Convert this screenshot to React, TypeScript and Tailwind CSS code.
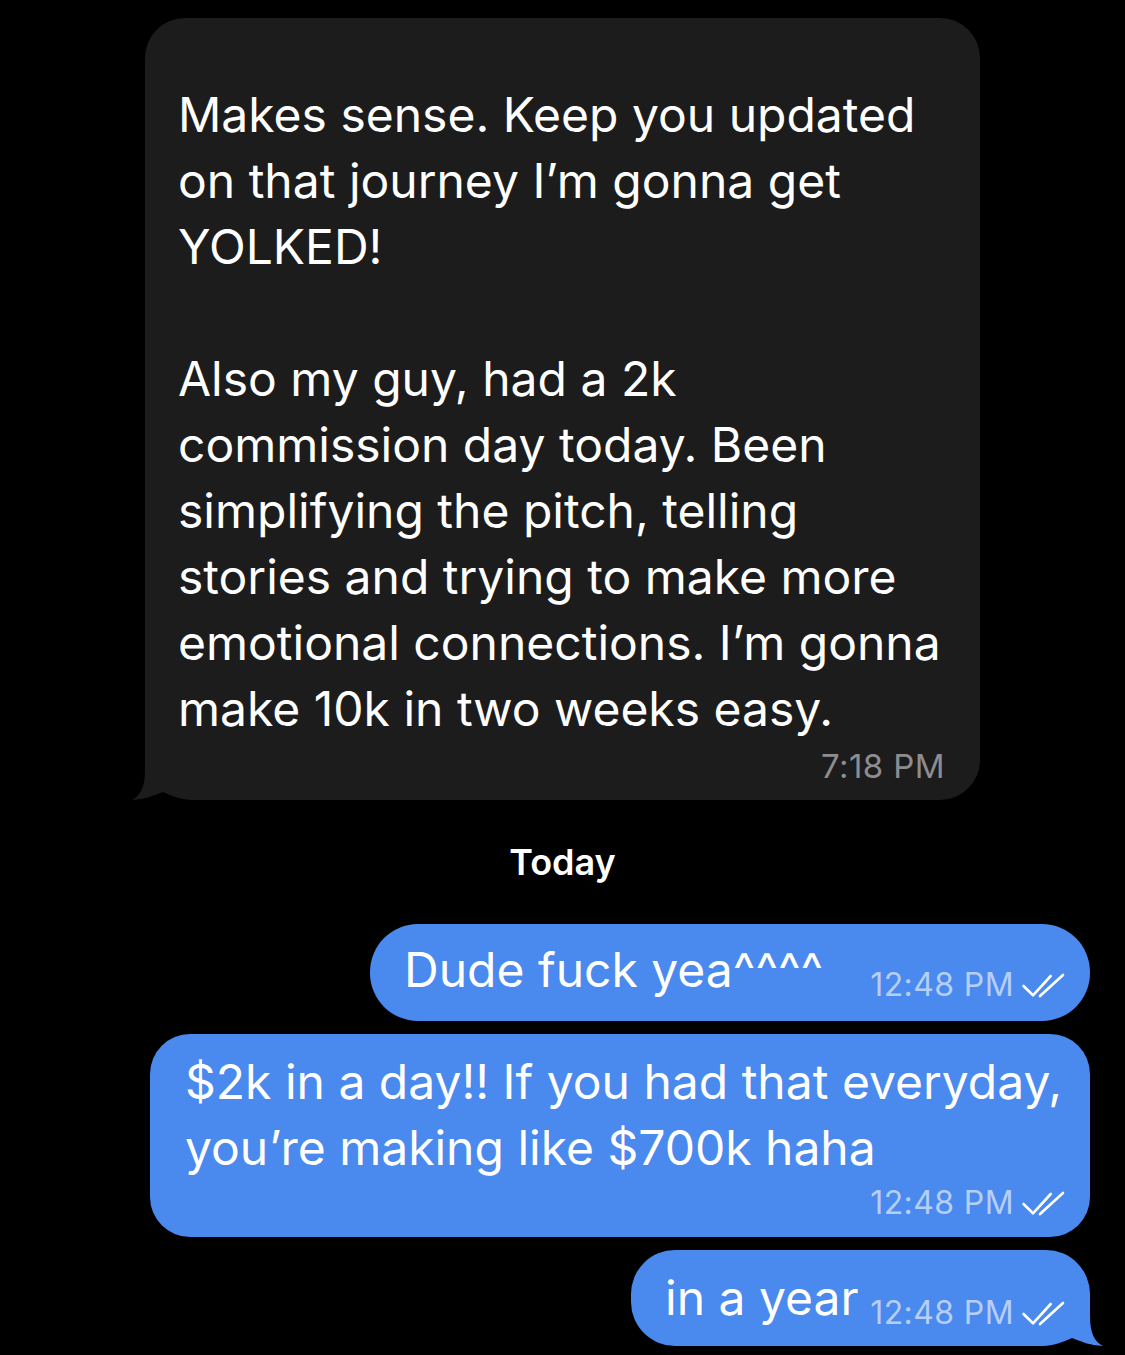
import React from "react";

const DARK = "#1c1c1d";
const BLUE = "#4a89ee";

function Tail({ color, flip }: { color: string; flip?: boolean }) {
  // corner tail + small notch along the bubble's bottom edge
  return (
    <svg
      width="60"
      height="30"
      viewBox="0 0 60 30"
      className={
        flip
          ? "absolute bottom-0 right-[-13px] -scale-x-100"
          : "absolute bottom-0 left-[-13px]"
      }
    >
      <path d="M13,0 C13,18 8,26 0,30 C12,30 23,25 31,22 L31,0 Z" fill={color} />
      <path d="M0,30 C12,30 23,25 31,22 C40,26 50,30 60,30 Z" fill="#000" />
    </svg>
  );
}

function Ticks() {
  return (
    <svg width="46" height="27" viewBox="0 0 46 27" className="shrink-0" fill="none">
      <path
        d="M3.5,14 L13,23.3 L30.7,4"
        stroke="#fff"
        strokeWidth="2.6"
        strokeLinecap="round"
        strokeLinejoin="round"
      />
      <path d="M20,24 L43,3" stroke="#fff" strokeWidth="2.6" strokeLinecap="round" />
    </svg>
  );
}

function Stamp({ time }: { time: string }) {
  return (
    <div className="flex shrink-0 items-center gap-[6px] text-[32px] leading-[36px] tracking-[0.4px] text-white/60">
      <span>{time}</span>
      <Ticks />
    </div>
  );
}

const received = [
  "Makes sense. Keep you updated",
  "on that journey I’m gonna get",
  "YOLKED!",
  "",
  "Also my guy, had a 2k",
  "commission day today. Been",
  "simplifying the pitch, telling",
  "stories and trying to make more",
  "emotional connections. I’m gonna",
  "make 10k in two weeks easy.",
];

export default function App() {
  return (
    <div
      className="min-h-[1355px] w-[1125px] overflow-hidden bg-black pt-[18px] text-white"
      style={{ fontFamily: "Inter, 'Noto Sans', sans-serif" }}
    >
      <div
        className="relative ml-[145px] w-[835px] rounded-[40px] rounded-bl-none pl-[33px] pr-[35px] pt-[64px] pb-[16px]"
        style={{ background: DARK }}
      >
        <div className="text-[48px] leading-[66px]">
          {received.map((line, i) => (
            <div key={i} className="h-[66px] whitespace-nowrap">
              {line}
            </div>
          ))}
        </div>
        <div className="mt-[6px] text-right text-[33px] leading-[36px] tracking-[0.4px] text-[#8d8d90]">7:18 PM</div>
        <Tail color={DARK} />
      </div>

      <div className="mt-[42px] mb-[42px] text-center text-[36px] font-semibold leading-[40px]">Today</div>

      <div className="flex flex-col items-end gap-[13px] pr-[35px] text-[48px] leading-[66px]">
        <div
          className="flex w-[720px] items-end justify-between rounded-[48px] pl-[34px] pr-[24px] pt-[13px] pb-[18px]"
          style={{ background: BLUE }}
        >
          <span className="whitespace-nowrap">Dude fuck yea^^^^</span>
          <Stamp time="12:48 PM" />
        </div>

        <div
          className="w-[940px] rounded-[40px] pl-[35px] pr-[24px] pt-[15px] pb-[16px]"
          style={{ background: BLUE }}
        >
          <div className="whitespace-nowrap">$2k in a day!! If you had that everyday,</div>
          <div className="whitespace-nowrap">you’re making like $700k haha</div>
          <div className="mt-[4px] flex justify-end">
            <Stamp time="12:48 PM" />
          </div>
        </div>

        <div
          className="relative flex w-[459px] items-end justify-between rounded-[44px] rounded-br-none pl-[34px] pr-[24px] pt-[15px] pb-[15px]"
          style={{ background: BLUE }}
        >
          <span className="whitespace-nowrap">in a year</span>
          <Stamp time="12:48 PM" />
          <Tail color={BLUE} flip />
        </div>
      </div>
    </div>
  );
}
